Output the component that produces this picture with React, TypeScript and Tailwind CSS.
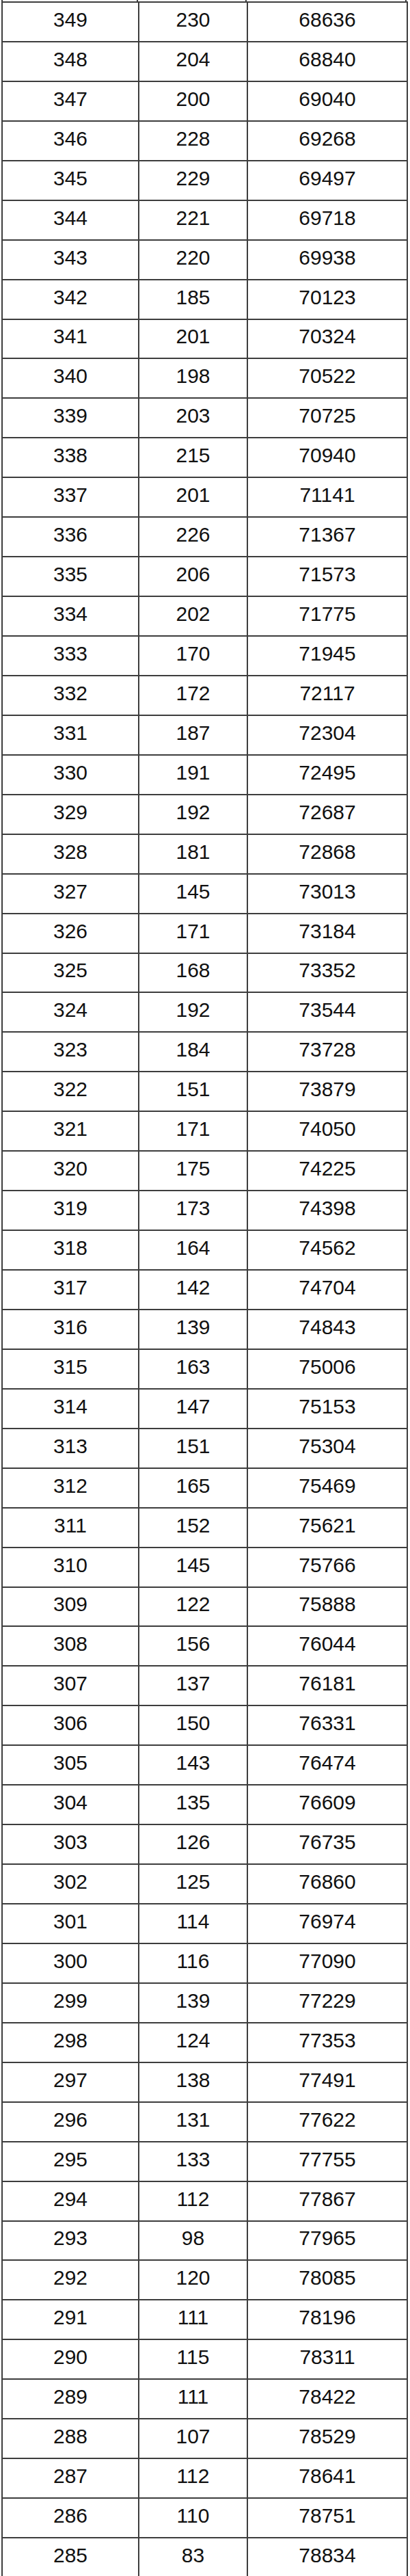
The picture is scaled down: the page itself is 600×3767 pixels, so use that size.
const rows: [number, number, number][] = [
  [349, 230, 68636], [348, 204, 68840], [347, 200, 69040], [346, 228, 69268],
  [345, 229, 69497], [344, 221, 69718], [343, 220, 69938], [342, 185, 70123],
  [341, 201, 70324], [340, 198, 70522], [339, 203, 70725], [338, 215, 70940],
  [337, 201, 71141], [336, 226, 71367], [335, 206, 71573], [334, 202, 71775],
  [333, 170, 71945], [332, 172, 72117], [331, 187, 72304], [330, 191, 72495],
  [329, 192, 72687], [328, 181, 72868], [327, 145, 73013], [326, 171, 73184],
  [325, 168, 73352], [324, 192, 73544], [323, 184, 73728], [322, 151, 73879],
  [321, 171, 74050], [320, 175, 74225], [319, 173, 74398], [318, 164, 74562],
  [317, 142, 74704], [316, 139, 74843], [315, 163, 75006], [314, 147, 75153],
  [313, 151, 75304], [312, 165, 75469], [311, 152, 75621], [310, 145, 75766],
  [309, 122, 75888], [308, 156, 76044], [307, 137, 76181], [306, 150, 76331],
  [305, 143, 76474], [304, 135, 76609], [303, 126, 76735], [302, 125, 76860],
  [301, 114, 76974], [300, 116, 77090], [299, 139, 77229], [298, 124, 77353],
  [297, 138, 77491], [296, 131, 77622], [295, 133, 77755], [294, 112, 77867],
  [293, 98, 77965], [292, 120, 78085], [291, 111, 78196], [290, 115, 78311],
  [289, 111, 78422], [288, 107, 78529], [287, 112, 78641], [286, 110, 78751],
  [285, 83, 78834],
];

export default function App() {
  return (
    <div className="w-[600px] h-[3767px] overflow-hidden bg-white font-['Liberation_Sans',Arial,sans-serif] text-[30px] text-[#111]">
      <div className="flex h-[2px]">
        <div className="ml-[2px] w-[200px] border-r-2 border-l-2 border-[#3d3d3d]" />
        <div className="w-[159px] border-r-2 border-[#3d3d3d]" />
        <div className="w-[234px] border-r-2 border-[#3d3d3d]" />
      </div>
      <div className="ml-[2px] w-[595px] border-l-2 border-t-2 border-[#3d3d3d]">
        {rows.map(([score, count, total]) => (
          <div key={score} className="grid h-[57.95px] grid-cols-[200px_159px_1fr] border-b-2 border-[#3d3d3d]">
            <div className="flex items-center justify-center border-r-2 border-[#3d3d3d] pb-[7px]">{score}</div>
            <div className="flex items-center justify-center border-r-2 border-[#3d3d3d] pb-[7px]">{count}</div>
            <div className="flex items-center justify-center border-r-2 border-[#3d3d3d] pb-[7px]">{total}</div>
          </div>
        ))}
      </div>
    </div>
  );
}
